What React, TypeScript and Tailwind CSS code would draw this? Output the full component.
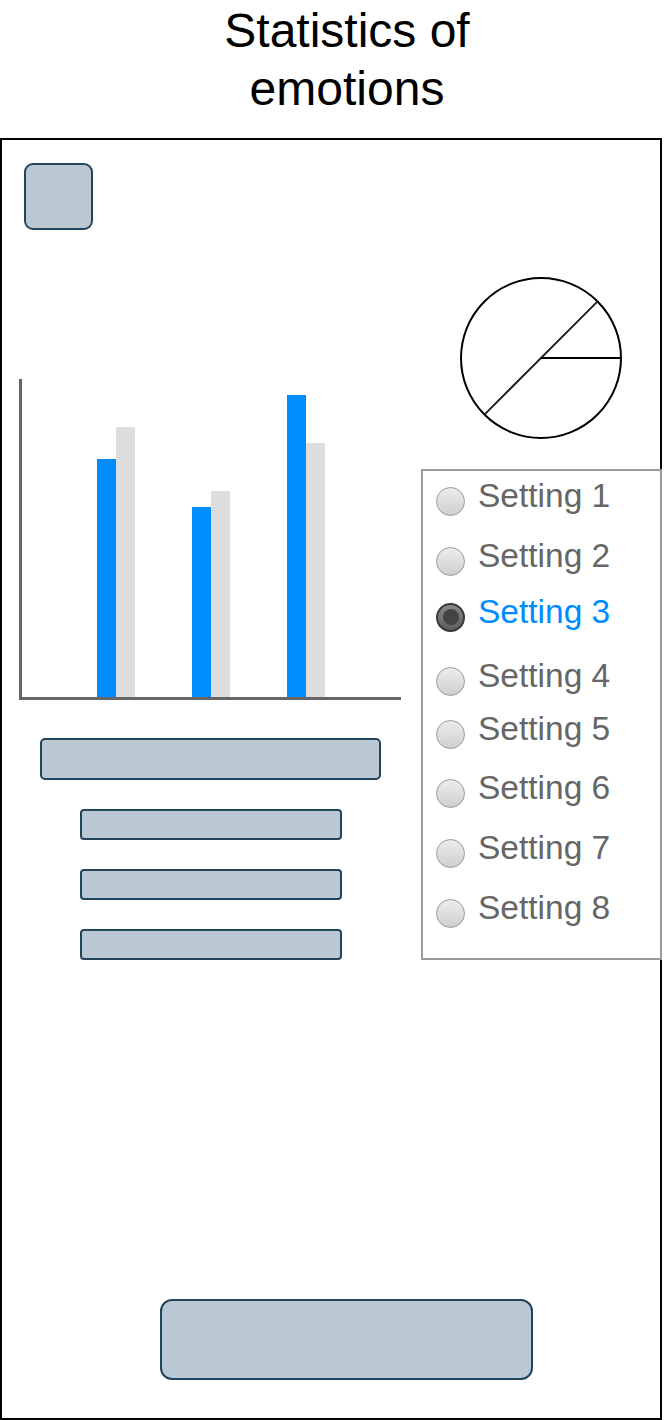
import React from "react";

const bars = [
  { blue: "h-[238px]", gray: "h-[270px]" },
  { blue: "h-[190px]", gray: "h-[206px]" },
  { blue: "h-[302px]", gray: "h-[254px]" },
];

const settings = [
  { label: "Setting 1", mt: "mt-[16px]" },
  { label: "Setting 2", mt: "mt-[32px]" },
  { label: "Setting 3", mt: "mt-[28px]", selected: true },
  { label: "Setting 4", mt: "mt-[36px]" },
  { label: "Setting 5", mt: "mt-[25px]" },
  { label: "Setting 6", mt: "mt-[31px]" },
  { label: "Setting 7", mt: "mt-[32px]" },
  { label: "Setting 8", mt: "mt-[32px]" },
];

function Radio({ selected }: { selected?: boolean }) {
  if (selected) {
    return (
      <span className="flex h-[29px] w-[29px] shrink-0 items-center justify-center rounded-full border-2 border-[#3a3a3a] bg-gradient-to-b from-[#8a8a8a] to-[#5c5c5c]">
        <span className="h-[16px] w-[16px] rounded-full bg-[#444444]" />
      </span>
    );
  }
  return (
    <span className="h-[29px] w-[29px] shrink-0 rounded-full border-[1.5px] border-[#9a9a9a] bg-gradient-to-b from-[#ececec] to-[#cfcfcf]" />
  );
}

function PieChart() {
  return (
    <svg width="164" height="164" viewBox="0 0 164 164" className="ml-[38px] mt-[46px] block">
      <circle cx="82" cy="82" r="80" fill="white" stroke="black" strokeWidth="2" />
      <line x1="25.4" y1="138.6" x2="138.6" y2="25.4" stroke="#222" strokeWidth="2" />
      <line x1="82" y1="82" x2="162" y2="82" stroke="black" strokeWidth="2" />
    </svg>
  );
}

export default function App() {
  return (
    <div className="w-[664px] bg-white font-['Liberation_Sans',Arial,sans-serif]">
      <div className="h-[138px] pl-[30px] pt-[2px] text-center text-[48px] leading-[1.2] text-black">
        Statistics of
        <br />
        emotions
      </div>

      <div className="h-[1282px] w-[662px] border-2 border-black">
        <div className="ml-[22px] mt-[23px] h-[67px] w-[69px] rounded-[9px] border-2 border-[#23445d] bg-[#bac8d3]" />

        <div className="flex items-start">
          <div className="w-[419px] shrink-0">
            <div className="ml-[17px] mt-[149px] flex h-[321px] w-[382px] items-end border-b-[3px] border-l-[3px] border-[#666666] pl-[75px]">
              <div className="flex items-end gap-[57px]">
                {bars.map((b, i) => (
                  <div key={i} className="flex items-end">
                    <div className={`w-[19px] bg-[#008cff] ${b.blue}`} />
                    <div className={`w-[19px] bg-[#dddddd] ${b.gray}`} />
                  </div>
                ))}
              </div>
            </div>

            <div className="ml-[38px] mt-[38px] h-[42px] w-[341px] rounded-[5px] border-2 border-[#23445d] bg-[#bac8d3]" />
            <div className="ml-[78px] mt-[29px] h-[31px] w-[262px] rounded-[4px] border-2 border-[#23445d] bg-[#bac8d3]" />
            <div className="ml-[78px] mt-[29px] h-[31px] w-[262px] rounded-[4px] border-2 border-[#23445d] bg-[#bac8d3]" />
            <div className="ml-[78px] mt-[29px] h-[31px] w-[262px] rounded-[4px] border-2 border-[#23445d] bg-[#bac8d3]" />
          </div>

          <div className="-mr-[2px] flex-1">
            <PieChart />
            <div className="mt-[29px] w-[241px] border-2 border-[#9a9a9a] bg-white pb-[31px] pl-[13px]">
              {settings.map((s) => (
                <div key={s.label} className={`flex h-[28px] items-center gap-[13px] ${s.mt}`}>
                  <Radio selected={s.selected} />
                  <span
                    className={`mb-[10px] whitespace-nowrap text-[33.5px] leading-none ${
                      s.selected ? "text-[#008cff]" : "text-[#666666]"
                    }`}
                  >
                    {s.label}
                  </span>
                </div>
              ))}
            </div>
          </div>
        </div>

        <div className="ml-[158px] mt-[339px] h-[81px] w-[373px] rounded-[12px] border-2 border-[#23445d] bg-[#bac8d3]" />
      </div>
    </div>
  );
}
